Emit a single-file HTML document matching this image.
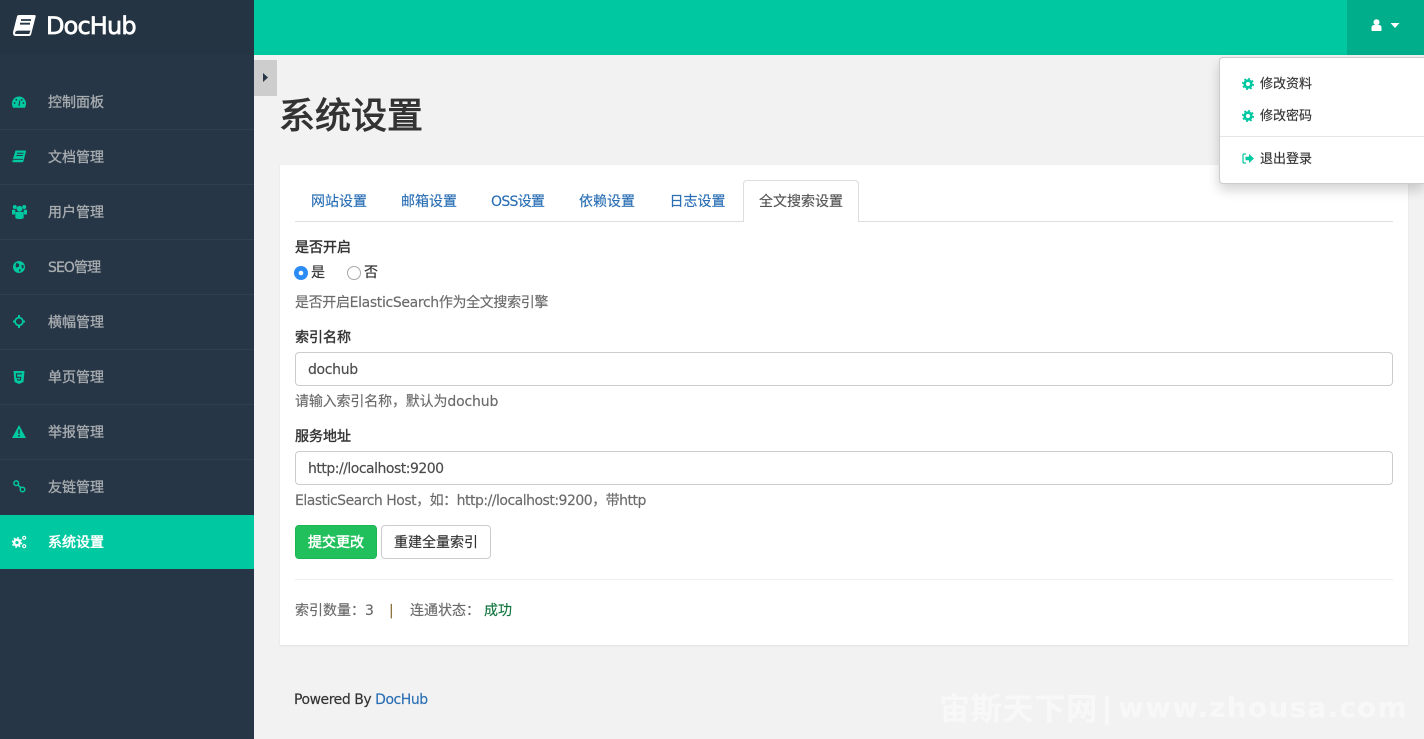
<!DOCTYPE html>
<html lang="zh-CN"><head><meta charset="utf-8"><title>系统设置</title>
<style>
*{box-sizing:border-box}
html,body{margin:0;padding:0;width:1424px;height:739px;overflow:hidden;background:#f2f2f2}
body{position:relative;font:14px/20px "DejaVu Sans","Noto Sans CJK SC",sans-serif;color:#333;-webkit-text-stroke:.15px}
.t{position:absolute;white-space:nowrap;line-height:20px;letter-spacing:0}
.a{position:absolute}
svg{position:absolute;display:block}
.nav{left:48px;color:#a9adb1;-webkit-text-stroke:.3px}
.sep{position:absolute;left:0;width:254px;height:1px;background:#2f3f4f}
.tab{color:#2a6fb5;top:192px}
.help{color:#6a6a6a}
.lab{color:#333;-webkit-text-stroke:.4px}
.input{position:absolute;left:295px;width:1098px;height:34px;background:#fff;border:1px solid #ccc;border-radius:4px;padding:7px 12px 5px;line-height:20px;color:#4a4a4a}
.dd{font-size:13px;left:1260px}
</style></head><body>
<div class="a" style="left:0;top:0;width:254px;height:739px;background:#263646"></div>
<div class="a" style="left:0;top:0;width:254px;height:55px;background:#243443"></div>
<div class="a" style="left:254px;top:0;width:1170px;height:55px;background:#00c8a0"></div>
<div class="a" style="left:1347px;top:0;width:77px;height:55px;background:#00ae8b"></div>

<svg style="left:13px;top:15px" width="23" height="22" viewBox="0 0 23 22"><path d="M6 0h15.500q1.500 0 1.100 1.700l-4.200 16.500q-.5 2.800-2.500 2.800H2.800Q0 21 0 18q0-1 .4-2.400L4 1.500Q4.400 0 6 0z" fill="#fff"/><path d="M2 18q.3-2.400 3-2.400h12.500l-1.300 3.400H3.600Q2 19 2 18z" fill="#263646"/><path d="M8 5h10M7 8.700h10" stroke="#263646" stroke-width="1.800"/></svg>
<div class="t" style="left:46px;top:10px;font-size:24px;line-height:32px;color:#fff;-webkit-text-stroke:.7px;letter-spacing:-.85px">DocHub</div>

<div class="sep" style="top:129px"></div><div class="sep" style="top:184px"></div><div class="sep" style="top:239px"></div><div class="sep" style="top:294px"></div><div class="sep" style="top:349px"></div><div class="sep" style="top:404px"></div><div class="sep" style="top:459px"></div>
<div class="a" style="left:0;top:515px;width:254px;height:54px;background:#00c8a0"></div>

<svg style="left:12px;top:96px" width="14" height="12" viewBox="0 0 14 12"><path d="M7 .5a7 7 0 0 1 7 7c0 1.700-.4 3-1 4.200H1c-.6-1.200-1-2.500-1-4.200a7 7 0 0 1 7-7z" fill="#00c8a0"/><g fill="#263646"><circle cx="2.600" cy="7" r=".9"/><circle cx="4.300" cy="3.800" r=".9"/><circle cx="9.700" cy="3.800" r=".9"/><circle cx="11.400" cy="7" r=".9"/><path d="M7.500 4l.7.200-.5 5.500H6.300z"/></g></svg>
<svg style="left:12px;top:150px" width="14" height="13" viewBox="0 0 14 13"><path d="M3.500 .5h9.800q.9 0 .6 1.200l-2.300 9q-.4 1.600-1.800 1.600H1.300Q.1 12.300.4 10.700z" fill="#00c8a0"/><path d="M1 10.300q.3-1 1.500-1h8.500" fill="none" stroke="#263646" stroke-width=".9"/><path d="M5 3.200h6.500M4.400 5.500h6.500" stroke="#263646" stroke-width="1"/></svg>
<svg style="left:12px;top:205px" width="15" height="14" viewBox="0 0 15 14"><g fill="#00c8a0"><circle cx="2.800" cy="2" r="2"/><circle cx="12.200" cy="2" r="2"/><circle cx="7.500" cy="3.800" r="2.900"/><path d="M0 4.800h3.400L3 9.500H0zM11.600 4.800H15v4.700h-3z"/><path d="M3.300 7h8.400v6q-1 1-4.200 1t-4.200-1z"/></g></svg>
<svg style="left:13px;top:261px" width="12" height="12" viewBox="0 0 12 12"><circle cx="6" cy="6" r="6" fill="#00c8a0"/><path d="M3.500 1.800L6 3l.3 2.300-2.800 1.500-1-1.600zM8.500 3.800l2 .4.300 2.500-2 .8zM6 8.200l2 .4-1 2.300-1-.7z" fill="#263646"/></svg>
<svg style="left:13px;top:315px" width="12" height="13" viewBox="0 0 12 13"><circle cx="6" cy="6.500" r="3.900" fill="none" stroke="#00c8a0" stroke-width="1.700"/><path d="M5 0h2v3.200H5zM5 9.800h2V13H5zM0 5.500h2.800v2H0zM9.200 5.500H12v2H9.200z" fill="#00c8a0"/></svg>
<svg style="left:13px;top:371px" width="12" height="13" viewBox="0 0 12 13"><path d="M.5 0h11l-1 11L6 13l-4.500-2z" fill="#00c8a0"/><path d="M8.800 2.800H3.400l.2 3.500h4.100l-.2 2.400L6 9.300l-1.400-.6-.1-1" fill="none" stroke="#263646" stroke-width="1.100"/></svg>
<svg style="left:12px;top:425px" width="14" height="13" viewBox="0 0 14 13"><path d="M7 0l7 13H0z" fill="#00c8a0"/><path d="M6.200 4.500h1.600l-.2 4.500H6.400zM6.200 10h1.600v1.500H6.200z" fill="#263646"/></svg>
<svg style="left:13px;top:480px" width="13" height="13" viewBox="0 0 13 13"><g fill="none" stroke="#00c8a0" stroke-width="1.500"><circle cx="3.200" cy="3.200" r="2.300"/><circle cx="9.500" cy="9.500" r="2.300"/><path d="M5 5l2.800 2.800"/></g></svg>
<svg style="left:12px;top:535px" width="15" height="14" viewBox="0 0 15 14"><g fill="none" stroke="#fff"><circle cx="5" cy="7.500" r="2.800" stroke-width="2.400"/><circle cx="5" cy="7.500" r="4.700" stroke-width="1.300" stroke-dasharray="1.800 1.900"/><circle cx="12.200" cy="2.800" r="1.500" stroke-width="1.200"/><circle cx="12.200" cy="11.200" r="1.500" stroke-width="1.200"/></g></svg>

<div class="t nav" style="top:92px;font-family:'Noto Sans CJK SC',sans-serif">控制面板</div>
<div class="t nav" style="top:147px;font-family:'Noto Sans CJK SC',sans-serif">文档管理</div>
<div class="t nav" style="top:202px;font-family:'Noto Sans CJK SC',sans-serif">用户管理</div>
<div class="t nav" style="top:258px;letter-spacing:-.9px">SEO管理</div>
<div class="t nav" style="top:312px;font-family:'Noto Sans CJK SC',sans-serif">横幅管理</div>
<div class="t nav" style="top:367px;font-family:'Noto Sans CJK SC',sans-serif">单页管理</div>
<div class="t nav" style="top:422px;font-family:'Noto Sans CJK SC',sans-serif">举报管理</div>
<div class="t nav" style="top:477px;font-family:'Noto Sans CJK SC',sans-serif">友链管理</div>
<div class="t nav" style="top:532px;color:#fff;-webkit-text-stroke:.5px;font-family:'Noto Sans CJK SC',sans-serif">系统设置</div>

<div class="a" style="left:254px;top:60px;width:23px;height:36px;background:#cdcdcd"></div>
<svg style="left:263px;top:73px" width="5" height="9" viewBox="0 0 5 9"><path d="M0 0l5 4.500L0 9z" fill="#263646"/></svg>

<div class="t" style="left:279px;top:90px;font-size:36px;line-height:46px;-webkit-text-stroke:.9px;color:#333;font-family:'Noto Sans CJK SC',sans-serif">系统设置</div>

<div class="a" style="left:280px;top:165px;width:1128px;height:480px;background:#fff;box-shadow:0 1px 2px rgba(0,0,0,.08)"></div>
<div class="a" style="left:295px;top:221px;width:1098px;height:1px;background:#ddd"></div>
<div class="a" style="left:743px;top:180px;width:116px;height:42px;background:#fff;border:1px solid #ddd;border-bottom:0;border-radius:4px 4px 0 0"></div>
<div class="t tab" style="left:311px">网站设置</div>
<div class="t tab" style="left:401px">邮箱设置</div>
<div class="t tab" style="left:491px;letter-spacing:-.7px">OSS设置</div>
<div class="t tab" style="left:579px">依赖设置</div>
<div class="t tab" style="left:669.500px">日志设置</div>
<div class="t" style="left:759px;top:192px;color:#555">全文搜索设置</div>

<div class="t lab" style="left:295px;top:238px">是否开启</div>
<svg style="left:294px;top:266px" width="14" height="14" viewBox="0 0 14 14"><circle cx="7" cy="7" r="7" fill="#2b8cf5"/><circle cx="7" cy="7" r="2.300" fill="#fff"/></svg>
<div class="t" style="left:311px;top:263px">是</div>
<svg style="left:347px;top:266px" width="14" height="14" viewBox="0 0 14 14"><circle cx="7" cy="7" r="6.500" fill="#fff" stroke="#a8a8a8"/></svg>
<div class="t" style="left:364px;top:263px">否</div>
<div class="t help" style="left:295px;top:293px;letter-spacing:-.35px">是否开启ElasticSearch作为全文搜索引擎</div>

<div class="t lab" style="left:295px;top:328px">索引名称</div>
<div class="input" style="top:352px;letter-spacing:-.33px">dochub</div>
<div class="t help" style="left:295px;top:392px;letter-spacing:-.15px">请输入索引名称，默认为dochub</div>
<div class="t lab" style="left:295px;top:427px">服务地址</div>
<div class="input" style="top:451px;letter-spacing:-.5px">http://localhost:9200</div>
<div class="t help" style="left:295px;top:491px;letter-spacing:-.5px">ElasticSearch Host，如：http://localhost:9200，带http</div>

<div class="a" style="left:295px;top:525px;width:82px;height:34px;background:#22c05c;border:1px solid #1bb553;border-radius:4px"></div>
<div class="t" style="left:308px;top:533px;color:#fff;-webkit-text-stroke:.5px">提交更改</div>
<div class="a" style="left:381px;top:525px;width:110px;height:34px;background:#fff;border:1px solid #ccc;border-radius:4px"></div>
<div class="t" style="left:394px;top:533px">重建全量索引</div>

<div class="a" style="left:295px;top:579px;width:1098px;height:1px;background:#eee"></div>
<div class="t help" style="left:295px;top:601px">索引数量：</div>
<div class="t help" style="left:365px;top:601px">3</div>
<div class="t" style="left:389px;top:601px;color:#8a6d3b">|</div>
<div class="t help" style="left:410px;top:601px">连通状态：</div>
<div class="t" style="left:484px;top:601px;color:#12753f">成功</div>

<div class="t" style="left:294px;top:690px;letter-spacing:-.47px">Powered By <span style="color:#2a6fb5">DocHub</span></div>

<div class="t" style="left:939px;top:690px;font-size:31px;line-height:34px;font-weight:700;color:#f8f8f8;-webkit-text-stroke:0;font-family:'Noto Sans CJK SC',sans-serif;letter-spacing:.8px">宙斯天下网</div>
<div class="a" style="left:1105px;top:696px;width:4px;height:29px;background:#f8f8f8"></div>
<div class="t" style="left:1118px;top:692px;font-size:28px;line-height:32px;font-weight:700;color:#f8f8f8;-webkit-text-stroke:0;letter-spacing:1.2px">www.zhousa.com</div>

<svg style="left:1371px;top:19px" width="11" height="12" viewBox="0 0 11 12"><circle cx="5.500" cy="3.200" r="3" fill="#fff"/><path d="M.5 11.200V8.500Q.5 6.200 3 6h5q2.500.2 2.500 2.500v2.700q0 .8-1 .8h-8q-1 0-1-.8z" fill="#fff"/></svg>
<svg style="left:1390px;top:23px" width="10" height="5" viewBox="0 0 10 5"><path d="M.5 0h9L5 5z" fill="#fff"/></svg>

<div class="a" style="left:1219px;top:57px;width:205px;height:127px;background:#fff;border:1px solid #ccc;border-right:0;border-radius:4px 0 0 4px;box-shadow:0 6px 12px rgba(0,0,0,.175)"></div>
<svg style="left:1242px;top:78px" width="12" height="12" viewBox="0 0 12 12"><circle cx="6" cy="6" r="3.400" fill="none" stroke="#00c8a0" stroke-width="2.600"/><circle cx="6" cy="6" r="5.300" fill="none" stroke="#00c8a0" stroke-width="1.400" stroke-dasharray="2 2.160"/></svg>
<svg style="left:1242px;top:110px" width="12" height="12" viewBox="0 0 12 12"><circle cx="6" cy="6" r="3.400" fill="none" stroke="#00c8a0" stroke-width="2.600"/><circle cx="6" cy="6" r="5.300" fill="none" stroke="#00c8a0" stroke-width="1.400" stroke-dasharray="2 2.160"/></svg>
<svg style="left:1242px;top:153px" width="12" height="11" viewBox="0 0 12 11"><path d="M4 1H2Q1 1 1 2v7q0 1 1 1h2" fill="none" stroke="#00c8a0" stroke-width="1.200"/><path d="M3.500 3.800H7V1l5 4.500L7 10V7.200H3.500z" fill="#00c8a0"/></svg>
<div class="t dd" style="top:75px">修改资料</div>
<div class="t dd" style="top:107px">修改密码</div>
<div class="a" style="left:1220px;top:136px;width:204px;height:1px;background:#e5e5e5"></div>
<div class="t dd" style="top:150px">退出登录</div>
</body></html>
